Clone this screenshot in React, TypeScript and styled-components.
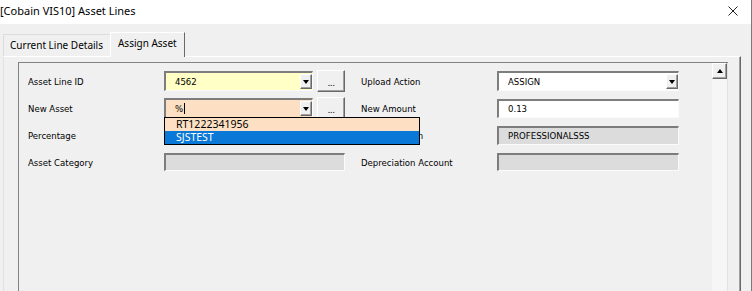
import React from "react"
import styled, { createGlobalStyle, css } from "styled-components"

const GlobalStyle = createGlobalStyle`
  html, body {
    margin: 0;
    padding: 0;
    background: #f0f0f0;
  }
  * {
    box-sizing: border-box;
  }
`

const sunken = css`
  border-style: solid;
  border-width: 2px 1px 1px 2px;
  border-color: #7d7d7d #fbfbfb #fbfbfb #7d7d7d;
`
const raised = css`
  border-style: solid;
  border-width: 1px;
  border-color: #ffffff #696969 #696969 #ffffff;
  box-shadow: inset -1px -1px 0 #a0a0a0;
  background: #f0f0f0;
`
const tahoma = css`
  font-family: "DejaVu Sans Condensed", "DejaVu Sans", sans-serif;
  font-stretch: condensed;
  font-size: 9.5px;
  color: #000;
`

const Window = styled.div`
  position: relative;
  width: 752px;
  height: 291px;
  overflow: hidden;
  display: flex;
  flex-direction: column;
  background: #f0f0f0;
  border-right: 1px solid #7a7a7a;
`
const TitleBar = styled.div`
  height: 24px;
  flex: none;
  display: flex;
  align-items: center;
  justify-content: space-between;
  padding: 0 13px 3px 0;
  background: #fff;
  font-family: "Noto Sans", sans-serif;
  font-size: 11px;
  color: #000;
`
const Body = styled.div`
  flex: 1;
  display: flex;
  flex-direction: column;
  padding: 7px 10px 0 3px;
  min-height: 0;
`
const TabStrip = styled.div`
  display: flex;
  align-items: flex-end;
  height: 25px;
`
const Tab = styled.div<{ $active?: boolean }>`
  display: flex;
  align-items: center;
  padding: 0 6px 2px;
  font-family: "Noto Sans", sans-serif;
  font-size: 10px;
  color: #000;
  background: #f0f0f0;
  border-style: solid;
  border-width: 1px 1px 0 1px;
  ${p =>
    p.$active
      ? css`
          height: 25px;
          padding: 0 7px 4px;
          border-color: #ffffff #696969 transparent #ffffff;
          margin-bottom: -1px;
          position: relative;
        `
      : css`
          height: 22px;
          border-color: #dcdcdc transparent transparent #dcdcdc;
        `}
`
const TabPage = styled.div`
  flex: 1;
  display: flex;
  padding: 5px 12px 0 14px;
  border-top: 1px solid #ffffff;
  border-left: 1px solid #e2e2e2;
  border-right: 1px solid #696969;
  box-shadow: inset -1px 0 0 #a0a0a0;
  min-height: 0;
`
const Frame = styled.div`
  flex: 1;
  display: flex;
  border-style: solid;
  border-width: 1px 0 0 1px;
  border-color: #828282;
`
const Form = styled.div`
  flex: 1;
  display: grid;
  grid-template-columns: 136px 197px 136px 182px;
  grid-auto-rows: 22px;
  row-gap: 5px;
  align-content: start;
  padding: 7px 0 0 9px;
`
const Label = styled.div`
  ${tahoma};
  display: flex;
  align-items: center;
  white-space: nowrap;
`
const Cell = styled.div`
  position: relative;
  display: flex;
  align-items: center;
  gap: 4px;
`
const Field = styled.div<{ $bg?: string; $width?: number; $height?: number }>`
  ${sunken};
  ${tahoma};
  display: flex;
  align-items: center;
  width: ${p => p.$width ?? 181}px;
  height: ${p => p.$height ?? 19}px;
  padding-left: 9px;
  background: ${p => p.$bg ?? "#dcdcdc"};
`
const FieldText = styled.span`
  flex: 1;
  white-space: nowrap;
`
const Caret = styled.span`
  display: inline-block;
  width: 1px;
  height: 11px;
  margin-left: 1px;
  vertical-align: -2px;
  background: #000;
`
const DropButton = styled.div`
  ${raised};
  flex: none;
  width: 12px;
  height: 15px;
  display: flex;
  align-items: center;
  justify-content: center;
`
const DownArrow = styled.span`
  width: 0;
  height: 0;
  border-left: 3px solid transparent;
  border-right: 3px solid transparent;
  border-top: 4px solid #000;
  margin-top: 1px;
`
const UpArrow = styled.span`
  width: 0;
  height: 0;
  border-left: 3px solid transparent;
  border-right: 3px solid transparent;
  border-bottom: 4px solid #000;
`
const EllipsisButton = styled.div`
  ${raised};
  flex: none;
  width: 28px;
  height: 22px;
  display: flex;
  align-items: center;
  justify-content: center;
  padding-top: 4px;
  font-family: "DejaVu Sans", sans-serif;
  font-size: 9px;
  letter-spacing: -0.5px;
  color: #000;
`
const DropList = styled.div`
  position: absolute;
  left: 0;
  top: 20px;
  width: 256px;
  border: 1px solid #000;
  background: #fde0c3;
  z-index: 2;
`
const ListItem = styled.div<{ $selected?: boolean }>`
  height: 13px;
  line-height: 13px;
  padding-left: 11px;
  font-family: "Noto Sans", sans-serif;
  font-size: 10.5px;
  color: ${p => (p.$selected ? "#fff" : "#000")};
  background: ${p => (p.$selected ? "#0a78d7" : "transparent")};
`
const ScrollBar = styled.div`
  width: 16px;
  display: flex;
  flex-direction: column;
  background: #f6f6f6;
  border-right: 1px solid #e2e2e2;
`
const ScrollUp = styled.div`
  ${raised};
  height: 16px;
  display: flex;
  align-items: center;
  justify-content: center;
`

function CloseIcon() {
  return (
    <svg width="10" height="10" viewBox="0 0 10 10">
      <path d="M0.5 0.5 L9.5 9.5 M9.5 0.5 L0.5 9.5" stroke="#222" strokeWidth="1" />
    </svg>
  )
}

function Combo({ bg, width = 149, children }: { bg: string; width?: number; children: React.ReactNode }) {
  return (
    <Field $bg={bg} $width={width} $height={20}>
      <FieldText>{children}</FieldText>
      <DropButton>
        <DownArrow />
      </DropButton>
    </Field>
  )
}

export default function App() {
  return (
    <>
      <GlobalStyle />
      <Window>
        <TitleBar>
          <span>[Cobain VIS10] Asset Lines</span>
          <CloseIcon />
        </TitleBar>
        <Body>
          <TabStrip>
            <Tab>Current Line Details</Tab>
            <Tab $active>Assign Asset</Tab>
          </TabStrip>
          <TabPage>
            <Frame>
              <Form>
                <Label>Asset Line ID</Label>
                <Cell>
                  <Combo bg="#ffffc6">4562</Combo>
                  <EllipsisButton>...</EllipsisButton>
                </Cell>
                <Label>Upload Action</Label>
                <Cell>
                  <Combo bg="#fff" width={182}>
                    ASSIGN
                  </Combo>
                </Cell>

                <Label>New Asset</Label>
                <Cell>
                  <Combo bg="#fde0c3">
                    %<Caret />
                  </Combo>
                  <EllipsisButton>...</EllipsisButton>
                  <DropList>
                    <ListItem>RT1222341956</ListItem>
                    <ListItem $selected>SJSTEST</ListItem>
                  </DropList>
                </Cell>
                <Label>New Amount</Label>
                <Cell>
                  <Field $bg="#fff" $width={182}>
                    0.13
                  </Field>
                </Cell>

                <Label>Percentage</Label>
                <Cell>
                  <Field />
                </Cell>
                <Label>Asset Location</Label>
                <Cell>
                  <Field $width={182}>PROFESSIONALSSS</Field>
                </Cell>

                <Label>Asset Category</Label>
                <Cell>
                  <Field $height={18} />
                </Cell>
                <Label>Depreciation Account</Label>
                <Cell>
                  <Field $width={182} $height={18} />
                </Cell>
              </Form>
              <ScrollBar>
                <ScrollUp>
                  <UpArrow />
                </ScrollUp>
              </ScrollBar>
            </Frame>
          </TabPage>
        </Body>
      </Window>
    </>
  )
}
